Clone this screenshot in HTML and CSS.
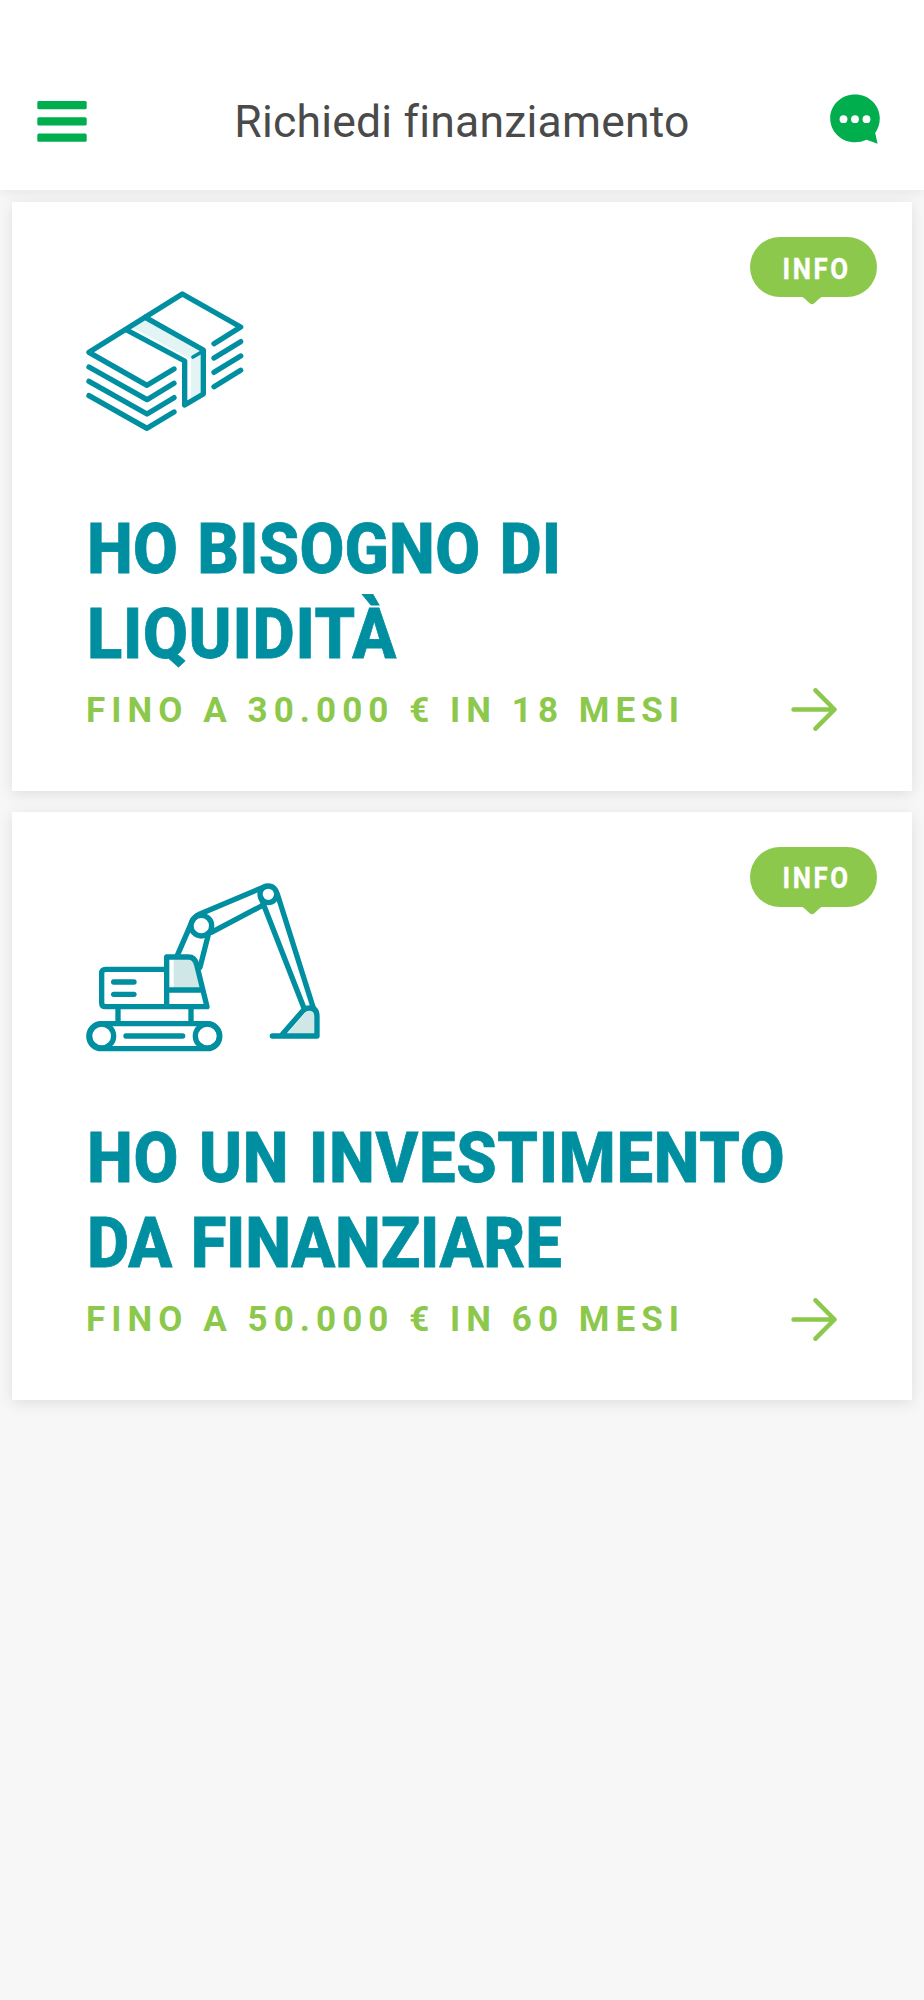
FILE: index.html
```html
<!DOCTYPE html>
<html lang="it">
<head>
    <meta charset="UTF-8">
    <meta name="viewport" content="width=device-width, initial-scale=1.0">
    <title>Richiedi finanziamento</title>
    <link rel="stylesheet" href="styles.css">
</head>
<body>
<header class="topbar">
    <button class="icon-button" aria-label="Menu">
        <svg class="menu-icon" width="50" height="42" viewBox="0 0 50 42" fill="#00ae4d">
            <rect x="0.3" y="1" width="49.4" height="8.2" rx="1.5"/>
            <rect x="0.3" y="17.2" width="49.4" height="8.4" rx="1.5"/>
            <rect x="0.3" y="33.4" width="49.4" height="8.4" rx="1.5"/>
        </svg>
    </button>
    <h1 class="topbar-title">Richiedi finanziamento</h1>
    <button class="icon-button" aria-label="Chat">
        <svg class="chat-icon" width="50" height="50" viewBox="0 0 50 50">
            <path fill="#00ae4d" d="M25 0.5C38.8 0.5 49.8 11 49.8 24.3C49.8 30 48 35 45.2 39L47.6 49.8L36.5 45.8C33 47.5 29 48.3 25 48.3C11.2 48.3 0.2 37.7 0.2 24.3C0.2 11 11.2 0.5 25 0.5Z"/>
            <circle cx="13.5" cy="25.2" r="3.9" fill="#fff"/>
            <circle cx="25" cy="25.2" r="3.9" fill="#fff"/>
            <circle cx="36.5" cy="25.2" r="3.9" fill="#fff"/>
        </svg>
    </button>
</header>

<main class="cards">
    <section class="card">
        <div class="info">
            <span class="info-label">INFO</span>
            <svg class="info-tail" width="24" height="9" viewBox="0 0 24 9"><path fill="#8cc84b" d="M0 0H24C20 1 17 5 14 7.5Q12 9 10 7.5C7 5 4 1 0 0Z"/></svg>
        </div>
        <svg class="card-icon" width="158" height="172" viewBox="48 -24 474 516" fill="none" stroke="#008fa0" stroke-width="16" stroke-linecap="round" stroke-linejoin="round">
            <path fill="#e3f4f5" stroke="none" d="M188 143L226 118L400 213V340L363 362V238Z"/>
            <path d="M432 191L512 141L337 42L57 217L231 316L312 267"/>
            <path d="M57 261L231 359L312 310"/>
            <path d="M57 304L231 402L312 353"/>
            <path d="M57 347L231 445L312 396"/>
            <path d="M170 150L344 243V375L400 342V210L226 112"/>
            <path stroke-width="11" d="M369 231L400 213"/>
            <path d="M432 234L512 185M432 277L512 228M432 320L512 271"/>
        </svg>
        <h2 class="card-title">HO BISOGNO DI<br><span class="wide">LIQUIDITÀ</span></h2>
        <div class="card-footer">
            <span class="card-subtitle">FINO A 30.000 € IN 18 MESI</span>
            <svg width="46" height="43" viewBox="0 0 46 43" fill="none" stroke="#8cc84b" stroke-width="4.5" stroke-linecap="round" stroke-linejoin="round"><path d="M2.5 21.5H43.5M24.5 2.3L43.5 21.5L24.5 40.7"/></svg>
        </div>
    </section>

    <section class="card">
        <div class="info">
            <span class="info-label">INFO</span>
            <svg class="info-tail" width="24" height="9" viewBox="0 0 24 9"><path fill="#8cc84b" d="M0 0H24C20 1 17 5 14 7.5Q12 9 10 7.5C7 5 4 1 0 0Z"/></svg>
        </div>
        <svg class="card-icon" width="235" height="172" viewBox="48 36 705 516" fill="none" stroke="#008fa0" stroke-width="16" stroke-linecap="round" stroke-linejoin="round">
            <path fill="#cfe7e7" stroke="none" d="M311 268H360Q374 270 379 285L394 354H311Z"/>
            <path fill="#cfe7e7" stroke="none" d="M652 491L706 428Q712 422 722 423Q736 427 736 445V491Z"/>
            <!-- tracks -->
            <path d="M94 461H412A37 37 0 0 1 412 536H94A37 37 0 0 1 94 461Z"/>
            <circle cx="95" cy="498" r="36"/>
            <circle cx="412" cy="498" r="36"/>
            <path d="M168 498H338M144 412V458M363 412V458"/>
            <!-- body and cab -->
            <path d="M289 298H107Q95 298 95 310V398Q95 410 107 410H411L380 284Q375 261 355 261H290V408M292 360H396M131 336H192M131 373H192"/>
            <!-- arm -->
            <circle cx="394" cy="167" r="31"/>
            <circle cx="595" cy="73" r="25"/>
            <path d="M322 256L366 155Q373 139 388 133L586 49M424 187L580 105M416 190L390 292M573 84L701 412M622 72L730 414"/>
            <path d="M607 498H741V440Q741 414 719 414Q706 414 698 423L638 492"/>
        </svg>
        <h2 class="card-title"><span class="wide">HO UN INVESTIMENTO</span><br><span class="tight">DA FINANZIARE</span></h2>
        <div class="card-footer">
            <span class="card-subtitle">FINO A 50.000 € IN 60 MESI</span>
            <svg width="46" height="43" viewBox="0 0 46 43" fill="none" stroke="#8cc84b" stroke-width="4.5" stroke-linecap="round" stroke-linejoin="round"><path d="M2.5 21.5H43.5M24.5 2.3L43.5 21.5L24.5 40.7"/></svg>
        </div>
    </section>
</main>
</body>
</html>
```
FILE: styles.css
```css
* {
    box-sizing: border-box;
}
body {
    font-family: Roboto, sans-serif;
    margin: 0;
    min-height: 2000px;
    background-color: #f7f7f7;
}

.topbar {
    display: flex;
    align-items: center;
    justify-content: space-between;
    height: 190px;
    padding: 53px 44px 0 37px;
    background-color: white;
    box-shadow: 0 2px 12px rgba(0, 0, 0, 0.08);
}
.topbar-title {
    margin: 0;
    padding: 1px 0 0 7px;
    font-size: 44.5px;
    font-weight: 400;
    line-height: 52px;
    letter-spacing: 0.2px;
    font-variant-ligatures: none;
    color: #4a4a4a;
    white-space: nowrap;
}
.icon-button {
    display: flex;
    padding: 0;
    border: none;
    background: none;
    cursor: pointer;
}
.menu-icon {
    margin-bottom: 2px;
}
.chat-icon {
    margin-bottom: 6px;
}

.cards {
    display: flex;
    flex-direction: column;
    gap: 21px;
    padding: 12px;
}
.card {
    position: relative;
    display: flex;
    flex-direction: column;
    height: 588.5px;
    padding: 70px 75px 0 74px;
    background-color: white;
    box-shadow: 0 3px 14px rgba(0, 0, 0, 0.1);
}
.card-title {
    margin: 62.5px 0 0 1px;
    font-size: 70px;
    font-weight: 800;
    line-height: 85.3px;
    letter-spacing: 0.2px;
    word-spacing: 3px;
    color: #008fa0;
    white-space: nowrap;
    -webkit-text-stroke: 0.8px #008fa0;
    transform: scaleX(0.93);
    transform-origin: left;
}
.card-title .wide {
    letter-spacing: 0.75px;
}
.card-title .tight {
    letter-spacing: -0.3px;
}
.card-footer {
    display: flex;
    align-items: center;
    justify-content: space-between;
    margin-top: 11px;
}
.card-subtitle {
    padding-top: 1px;
    font-size: 35px;
    font-weight: 700;
    line-height: 41px;
    letter-spacing: 6.05px;
    color: #8cc84b;
    white-space: nowrap;
}

.info {
    position: absolute;
    top: 35px;
    right: 35px;
    display: flex;
    align-items: center;
    justify-content: center;
    width: 127px;
    height: 60px;
    padding: 2px 0 0 7px;
    border-radius: 30px;
    background-color: #8cc84b;
}
.info-label {
    font-size: 30px;
    font-weight: 700;
    letter-spacing: 3px;
    color: white;
    -webkit-text-stroke: 0.4px white;
    transform: scaleX(0.86);
}
.info-tail {
    position: absolute;
    top: 59px;
    left: 50px;
}
```
